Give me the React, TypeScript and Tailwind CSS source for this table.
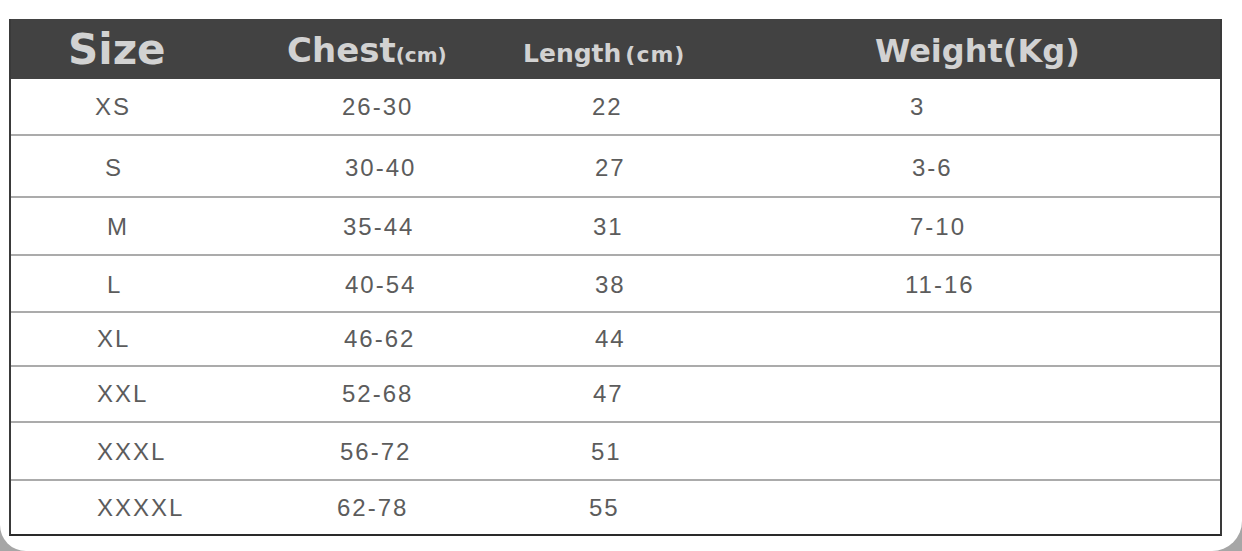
import React from "react";

type Row = {
  h: string;
  size: string;
  chest: string;
  length: string;
  weight: string;
  p1: string;
  p2: string;
  p3: string;
  p4: string;
  last?: boolean;
};

const rows: Row[] = [
  { h: "h-[57px]", size: "XS", chest: "26-30", length: "22", weight: "3", p1: "pl-[84px]", p2: "pl-[42px]", p3: "pl-[32px]", p4: "pl-[50px]" },
  { h: "h-[62px] pt-[4px]", size: "S", chest: "30-40", length: "27", weight: "3-6", p1: "pl-[94px]", p2: "pl-[45px]", p3: "pl-[35px]", p4: "pl-[52px]" },
  { h: "h-[58px] pt-[2px]", size: "M", chest: "35-44", length: "31", weight: "7-10", p1: "pl-[96px]", p2: "pl-[43px]", p3: "pl-[33px]", p4: "pl-[50px]" },
  { h: "h-[57px] pt-[2px]", size: "L", chest: "40-54", length: "38", weight: "11-16", p1: "pl-[96px]", p2: "pl-[45px]", p3: "pl-[35px]", p4: "pl-[45px]" },
  { h: "h-[54px]", size: "XL", chest: "46-62", length: "44", weight: "", p1: "pl-[86px]", p2: "pl-[44px]", p3: "pl-[35px]", p4: "pl-[45px]" },
  { h: "h-[56px]", size: "XXL", chest: "52-68", length: "47", weight: "", p1: "pl-[86px]", p2: "pl-[42px]", p3: "pl-[33px]", p4: "pl-[45px]" },
  { h: "h-[58px] pt-[2px]", size: "XXXL", chest: "56-72", length: "51", weight: "", p1: "pl-[86px]", p2: "pl-[40px]", p3: "pl-[31px]", p4: "pl-[45px]" },
  { h: "h-[53px]", size: "XXXXL", chest: "62-78", length: "55", weight: "", p1: "pl-[86px]", p2: "pl-[37px]", p3: "pl-[29px]", p4: "pl-[45px]", last: true },
];

const head = { fontFamily: '"DejaVu Sans", "Liberation Sans", sans-serif' };
const body = { fontFamily: '"Liberation Sans", Arial, sans-serif' };

export default function App() {
  return (
    <div className="h-[551px] w-[1242px] bg-[#a6a6a6] overflow-hidden">
      <div className="h-[551px] w-[1242px] bg-white rounded-bl-[26px] rounded-br-[30px] pt-[19px] pl-[9px]">
        <div className="w-[1213px] border-l-2 border-r-2 border-b-2 border-l-[#3a3a3a] border-r-[#3a3a3a] border-b-[#2a2a2a]">
          {/* header */}
          <div className="h-[60px] bg-[#424242] flex items-center text-[#d2d2d2] pt-[2px]" style={head}>
            <div className="w-[269px] pl-[57px] flex items-baseline">
              <span className="text-[42px] font-bold leading-none">Size</span>
            </div>
            <div className="w-[230px] pl-[7px] flex items-baseline">
              <span className="text-[34px] font-bold leading-none">Chest</span>
              <span className="text-[20px] font-bold leading-none">(cm)</span>
            </div>
            <div className="w-[350px] pl-[13px] flex items-baseline pt-[6px]">
              <span className="text-[25px] font-bold leading-none">Length</span>
              <span className="text-[22px] font-bold leading-none ml-[4px] tracking-[1px]">(cm)</span>
            </div>
            <div className="flex-1 pl-[15px] flex items-baseline pt-[2px]">
              <span className="text-[32px] font-bold leading-none">Weight(Kg)</span>
            </div>
          </div>
          {/* rows */}
          {rows.map((r) => (
            <div
              key={r.size}
              className={`${r.h} flex items-center text-[24px] tracking-[2px] text-[#5c5c5c] ${r.last ? "" : "border-b-2 border-[#ababab]"}`}
              style={body}
            >
              <div className={`w-[289px] ${r.p1}`}>{r.size}</div>
              <div className={`w-[260px] ${r.p2}`}>{r.chest}</div>
              <div className={`w-[300px] ${r.p3}`}>{r.length}</div>
              <div className={`flex-1 ${r.p4}`}>{r.weight}</div>
            </div>
          ))}
        </div>
      </div>
    </div>
  );
}
